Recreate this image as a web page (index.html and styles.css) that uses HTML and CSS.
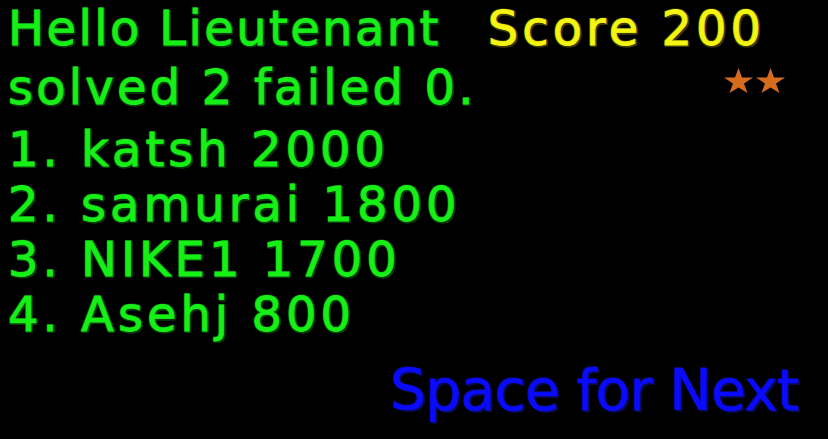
FILE: index.html
```html
<!DOCTYPE html>
<html>
<head>
<meta charset="utf-8">
<link rel="stylesheet" href="styles.css">
</head>
<body>
<div class="screen">
  <div class="row top">
    <span class="green hello">Hello Lieutenant</span>
    <span class="yellow">Score 200</span>
  </div>
  <div class="row second">
    <span class="green solved">solved 2 failed 0.</span>
    <svg class="stars" width="64" height="26" viewBox="0 0 64 26">
      <polygon fill="#d86c1e" points="15.5,0 19,9.5 30,9.5 21,15.5 24.5,25 15.5,19.5 6.5,25 10,15.5 1,9.5 12,9.5"/>
      <polygon fill="#d86c1e" points="47.5,0 51,9.5 62,9.5 53,15.5 56.5,25 47.5,19.5 38.5,25 42,15.5 33,9.5 44,9.5"/>
    </svg>
  </div>
  <div class="list">
    <div class="green">1. katsh 2000</div>
    <div class="green">2. samurai 1800</div>
    <div class="green">3. NIKE1 1700</div>
    <div class="green">4. Asehj 800</div>
  </div>
  <div class="next">Space for Next</div>
</div>
</body>
</html>
```
FILE: styles.css
```css
html, body {
  margin: 0;
  padding: 0;
  background: #000;
}
.screen {
  width: 828px;
  height: 439px;
  overflow: hidden;
  box-sizing: border-box;
  padding: 0 0 0 8px;
  font-family: "DejaVu Sans", Verdana, sans-serif;
  font-size: 48px;
}
.row {
  display: flex;
  align-items: baseline;
}
.top {
  height: 56px;
  line-height: 56px;
  gap: 47px;
}
.second {
  height: 55px;
  line-height: 55px;
  margin-top: 4px;
  justify-content: space-between;
  padding-right: 41px;
}
.hello {
  letter-spacing: 2.4px;
}
.solved {
  letter-spacing: 3.2px;
}
.green {
  color: #16f016;
  -webkit-text-stroke: 0.8px #16f016;
  text-shadow: 2px 2px 0 #0b3a0b, -1px -1px 0 #0b3a0b, 1px -1px 0 #0b3a0b, -1px 1px 0 #0b3a0b, 2px 0 0 #0b3a0b, 0 2px 0 #0b3a0b;
}
.yellow {
  color: #f4f410;
  -webkit-text-stroke: 0.8px #f4f410;
  letter-spacing: 4px;
  text-shadow: 2px 2px 0 #3a3a0b, -1px -1px 0 #3a3a0b, 1px -1px 0 #3a3a0b, -1px 1px 0 #3a3a0b, 2px 0 0 #3a3a0b, 0 2px 0 #3a3a0b;
}
.stars {
  align-self: flex-start;
  margin-top: 8px;
}
.list {
  margin-top: 7px;
  line-height: 55px;
  letter-spacing: 4px;
}
.next {
  color: #0a0aff;
  -webkit-text-stroke: 0.6px #0a0aff;
  font-size: 57px;
  line-height: 60px;
  letter-spacing: -0.9px;
  margin-top: 18px;
  padding-left: 382px;
  text-shadow: 2px 2px 0 #0a0a48, -1px -1px 0 #0a0a48, 1px 1px 0 #0a0a48;
}
```
